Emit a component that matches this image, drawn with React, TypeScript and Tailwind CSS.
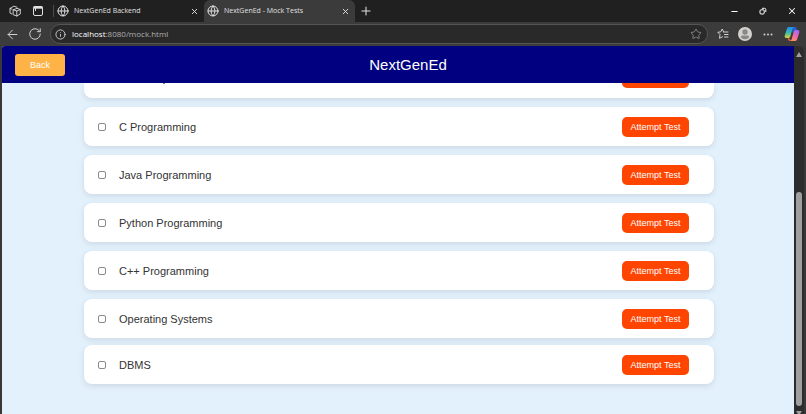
import {
  ArrowLeft,
  Globe,
  Info,
  Minus,
  Plus,
  RotateCw,
  Star,
  X,
} from "lucide-react";

const tests = [
  { id: "c", name: "C Programming" },
  { id: "java", name: "Java Programming" },
  { id: "python", name: "Python Programming" },
  { id: "cpp", name: "C++ Programming" },
  { id: "os", name: "Operating Systems" },
];

const WorkspacesIcon = () => (
  <svg
    className="size-3"
    viewBox="0 0 12 12"
    fill="none"
    stroke="currentColor"
    strokeWidth="0.9"
    strokeLinejoin="round"
    strokeLinecap="round"
  >
    <path d="M4.500 4.800 8 3.300 11.300 4.500V9L7.800 11 4.500 9.800ZM7.800 6v5M4.500 4.800 7.800 6l3.500-1.500" />
    <path d="M2.800 9 1 8V3.500L4.800 1.200 8 2.200M1 3.500l2 .7" />
  </svg>
);

const TabActionsIcon = () => (
  <svg className="size-3" viewBox="0 0 12 12" fill="none" stroke="currentColor">
    <rect x="1.5" y="1.5" width="9" height="9" rx="1.5" />
    <path d="M1.5 2.500h9" strokeWidth="2.4" />
    <path d="M3.500 3v3" />
  </svg>
);

const RestoreIcon = () => (
  <svg className="size-2" viewBox="0 0 8 8" fill="none" stroke="currentColor">
    <rect x="1" y="2.8" width="4.2" height="4.2" rx="1" />
    <path d="M3 1.3h2.5a1.3 1.3 0 0 1 1.3 1.3V5" />
  </svg>
);

const FavoritesIcon = () => (
  <svg
    className="size-3"
    viewBox="0 0 12 12"
    fill="none"
    stroke="currentColor"
    strokeLinejoin="round"
    strokeLinecap="round"
  >
    <path d="M6.500 3.600 5.200 1 3.800 3.800.8 4.300 3 6.500 2.500 10.300 5.500 8.800M6.500 4h4.500M7.500 6.500h3.500M7.500 9h3.500" />
  </svg>
);

const CopilotIcon = () => (
  <svg className="size-4" viewBox="0 0 16 16">
    <defs>
      <linearGradient id="copilotLeft" x1="0" y1="0" x2="0" y2="1">
        <stop offset="0" stopColor="#1f8df0" />
        <stop offset="0.55" stopColor="#38c0a0" />
        <stop offset="1" stopColor="#e8cf3a" />
      </linearGradient>
      <linearGradient id="copilotRight" x1="0.7" y1="0" x2="0.3" y2="1">
        <stop offset="0" stopColor="#a06af5" />
        <stop offset="0.5" stopColor="#f067b0" />
        <stop offset="1" stopColor="#ff8f55" />
      </linearGradient>
    </defs>
    <path
      d="M8 1h2.800c.9 0 1.300.6 1.600 1.500l.4 1.500h-2L8.500 7Z"
      fill="#2563d8"
    />
    <path
      d="M5 1h5c-1 .4-1.400 1.200-1.700 2.200L6.500 10c-.5 1.600-1.200 2-2.500 2H2.500C.8 12 .4 10.700.8 9.300L2.800 3C3.200 1.600 4 1 5 1Z"
      fill="url(#copilotLeft)"
    />
    <path
      d="M3.500 12.500h2l1 2.500H6c-1 0-1.600-.6-1.900-1.500Z"
      fill="#ee6a3c"
    />
    <path
      d="M11 15H6c1-.4 1.500-1.200 1.800-2.200L9.600 6c.5-1.500 1.200-2 2.400-2h1.500c1.700 0 2.100 1.300 1.700 2.700L13.200 13c-.4 1.400-1.200 2-2.200 2Z"
      fill="url(#copilotRight)"
    />
  </svg>
);

const TestCard = ({ id, name }: { id: string; name: string }) => (
  <li className="flex h-[39px] shrink-0 items-center rounded-lg bg-white pr-[25px] pl-[14px] shadow-[0_2px_6px_rgba(0,0,0,0.1)]">
    <input
      id={id}
      type="checkbox"
      className="size-2 appearance-none rounded-[2px] border border-[#8a8a8a] bg-white checked:bg-[#0075ff]"
    />
    <label htmlFor={id} className="ml-[13px] grow text-[11px] leading-4 text-[#333]">
      {name}
    </label>
    <button className="h-5 w-[67px] shrink-0 rounded-[5px] bg-[#ff4500] text-[9px] leading-3 text-white">
      Attempt Test
    </button>
  </li>
);

const TabBar = () => (
  <div className="flex h-[22px] items-center bg-[#202020] pl-[9px] text-[#e0e0e0]">
    <button aria-label="Workspaces" className="mr-[11px]">
      <WorkspacesIcon />
    </button>
    <button aria-label="Tab actions">
      <TabActionsIcon />
    </button>
    <div className="ml-[9px] h-3 w-px bg-[#4a4a4a]" />
    <div className="ml-[3px] flex w-[147px] items-center text-[7px] leading-3">
      <Globe className="mr-[5px] size-3" strokeWidth={2} />
      <span className="grow">NextGenEd Backend</span>
      <button aria-label="Close NextGenEd Backend" className="mr-[5px]">
        <X className="size-[9px]" strokeWidth={2.5} />
      </button>
    </div>
    <div className="flex h-full w-[151px] items-center rounded-t-md bg-[#3b3b3b] pl-[3px] text-[7px] leading-3">
      <Globe className="mr-[5px] size-3" strokeWidth={2} />
      <span className="grow">NextGenEd - Mock Tests</span>
      <button aria-label="Close NextGenEd - Mock Tests" className="mr-[5px]">
        <X className="size-[9px]" strokeWidth={2.5} />
      </button>
    </div>
    <button aria-label="New tab" className="ml-[4px]">
      <Plus className="size-[14px]" strokeWidth={1.8} />
    </button>
    <div className="ml-auto flex items-center gap-5 pr-[9px] text-white">
      <button aria-label="Minimize">
        <Minus className="size-[9px]" strokeWidth={3} />
      </button>
      <button aria-label="Restore">
        <RestoreIcon />
      </button>
      <button aria-label="Close">
        <X className="size-[10px]" strokeWidth={2.5} />
      </button>
    </div>
  </div>
);

const AddressBar = () => (
  <div className="flex h-6 items-center bg-[#3b3b3b] pr-[6px] pl-[5px] text-[#d0d0d0]">
    <button aria-label="Back">
      <ArrowLeft className="size-[15px]" strokeWidth={1.6} />
    </button>
    <button aria-label="Refresh" className="ml-2">
      <RotateCw className="size-[14px]" strokeWidth={1.7} />
    </button>
    <div className="ml-[8px] flex h-5 min-w-0 grow items-center rounded-full border border-[#555] bg-[#292929] pr-[5px] pl-[4px]">
      <Info className="size-[11px] shrink-0" strokeWidth={2} />
      <div className="ml-[6px] min-w-0 grow text-[8px] leading-3">
        <span className="text-white">localhost</span>
        <span className="text-[#b0b0b0]">:8080/mock.html</span>
      </div>
      <button aria-label="Add to favorites">
        <Star className="size-3 text-[#8a8a8a]" strokeWidth={1.8} />
      </button>
    </div>
    <button aria-label="Favorites" className="ml-[9px]">
      <FavoritesIcon />
    </button>
    <button aria-label="Profile" className="ml-[9px]">
      <svg className="size-[14px]" viewBox="0 0 14 14">
        <circle cx="7" cy="7" r="7" fill="#d4d2d0" />
        <circle cx="7" cy="5" r="2.700" fill="#8a8886" />
        <path
          d="M2.800 10.500C3 8.800 4 8.500 5 8.500h4c1 0 2 .3 2.200 2A5.500 5.500 0 0 1 7 12.300a5.500 5.500 0 0 1-4.200-1.800Z"
          fill="#8a8886"
        />
      </svg>
    </button>
    <button aria-label="Settings and more" className="ml-[11px]">
      <svg className="h-3 w-[10px]" viewBox="0 0 10 12" fill="currentColor">
        <circle cx="1.500" cy="6.500" r="1" />
        <circle cx="5" cy="6.500" r="1" />
        <circle cx="8.500" cy="6.500" r="1" />
      </svg>
    </button>
    <button aria-label="Copilot" className="ml-[11px]">
      <CopilotIcon />
    </button>
  </div>
);

const Scrollbar = () => (
  <div className="mr-[2px] flex w-[10px] shrink-0 flex-col items-center rounded-tr-md bg-[#2c2c2c] pt-[6px]">
    <svg className="h-[5px] w-[6px]" viewBox="0 0 6 5" fill="#9f9f9f">
      <path d="M3 0 6 5H0Z" />
    </svg>
    <div className="mt-auto h-[214px] w-[6px] rounded-full bg-[#9f9f9f]" />
    <svg className="mt-[5px] h-[3px] w-[6px]" viewBox="0 0 6 3" fill="#9f9f9f">
      <path d="M0 0h6L4 3H2Z" />
    </svg>
  </div>
);

const MockTestsPage = () => (
  <div className="flex min-w-0 grow flex-col overflow-hidden rounded-tl-[3px] bg-[#e3f1fc] font-['Liberation_Sans',Arial,sans-serif]">
    <header className="grid h-[37px] shrink-0 grid-cols-[1fr_auto_1fr] items-center bg-[#000080] px-[13px] text-white">
      <button className="h-[22px] w-[50px] rounded-[3px] bg-[#ffb347] text-[9px] leading-3">
        Back
      </button>
      <h1 className="pl-5 text-[15px] leading-5">NextGenEd</h1>
    </header>
    <main className="min-h-0 grow pr-20 pl-[82px]">
      {/* lower edge of the card scrolled under the header */}
      <div className="flex h-[15px] items-start justify-between rounded-b-lg bg-white pr-[25px] pl-[79px] shadow-[0_2px_6px_rgba(0,0,0,0.1)]">
        <div className="h-px w-[2px] bg-[#777]" />
        <div className="h-[5px] w-[67px] rounded-b-[5px] bg-[#ff4500]" />
      </div>
      <ul className="mt-[9px] flex flex-col gap-[9px]">
        {tests.map((test) => (
          <TestCard key={test.id} id={test.id} name={test.name} />
        ))}
      </ul>
      <ul className="mt-[7px]">
        <TestCard id="dbms" name="DBMS" />
      </ul>
    </main>
  </div>
);

const App = () => {
  return (
    <div className="flex h-screen flex-col overflow-hidden bg-[#383838] font-['Open_Sans','Noto_Sans',sans-serif]">
      <TabBar />
      <AddressBar />
      <div className="flex min-h-0 grow pl-[2px]">
        <MockTestsPage />
        <Scrollbar />
      </div>
    </div>
  );
};

export default App;
